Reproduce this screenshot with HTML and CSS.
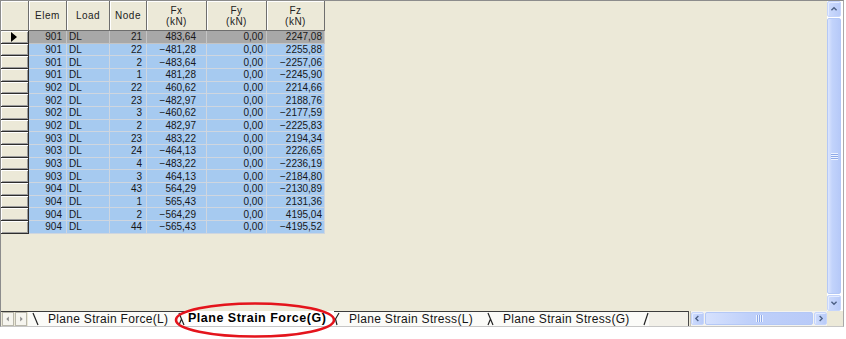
FILE: index.html
```html
<!DOCTYPE html>
<html lang="en">
<head>
    <meta charset="UTF-8">
    <title>Plane Strain Force(G)</title>
    <link rel="stylesheet" href="styles.css">
</head>
<body>
    <div class="screen">
        <div class="window">
            <div class="main">
                <div class="sheet">
                    <table class="grid">
                        <thead>
                            <tr>
                                <th class="c-head"></th>
                                <th class="c-elem">Elem</th>
                                <th class="c-load">Load</th>
                                <th class="c-node">Node</th>
                                <th class="c-fx">Fx<br>(kN)</th>
                                <th class="c-fy">Fy<br>(kN)</th>
                                <th class="c-fz">Fz<br>(kN)</th>
                            </tr>
                        </thead>
                        <tbody>
                            <tr class="current"><td class="rowhead"><span class="pointer"></span></td><td>901</td><td class="txt">DL</td><td>21</td><td>483,64</td><td>0,00</td><td>2247,08</td></tr>
                            <tr><td class="rowhead"></td><td>901</td><td class="txt">DL</td><td>22</td><td>−481,28</td><td>0,00</td><td>2255,88</td></tr>
                            <tr><td class="rowhead"></td><td>901</td><td class="txt">DL</td><td>2</td><td>−483,64</td><td>0,00</td><td>−2257,06</td></tr>
                            <tr><td class="rowhead"></td><td>901</td><td class="txt">DL</td><td>1</td><td>481,28</td><td>0,00</td><td>−2245,90</td></tr>
                            <tr><td class="rowhead"></td><td>902</td><td class="txt">DL</td><td>22</td><td>460,62</td><td>0,00</td><td>2214,66</td></tr>
                            <tr><td class="rowhead"></td><td>902</td><td class="txt">DL</td><td>23</td><td>−482,97</td><td>0,00</td><td>2188,76</td></tr>
                            <tr><td class="rowhead"></td><td>902</td><td class="txt">DL</td><td>3</td><td>−460,62</td><td>0,00</td><td>−2177,59</td></tr>
                            <tr><td class="rowhead"></td><td>902</td><td class="txt">DL</td><td>2</td><td>482,97</td><td>0,00</td><td>−2225,83</td></tr>
                            <tr><td class="rowhead"></td><td>903</td><td class="txt">DL</td><td>23</td><td>483,22</td><td>0,00</td><td>2194,34</td></tr>
                            <tr><td class="rowhead"></td><td>903</td><td class="txt">DL</td><td>24</td><td>−464,13</td><td>0,00</td><td>2226,65</td></tr>
                            <tr><td class="rowhead"></td><td>903</td><td class="txt">DL</td><td>4</td><td>−483,22</td><td>0,00</td><td>−2236,19</td></tr>
                            <tr><td class="rowhead"></td><td>903</td><td class="txt">DL</td><td>3</td><td>464,13</td><td>0,00</td><td>−2184,80</td></tr>
                            <tr><td class="rowhead"></td><td>904</td><td class="txt">DL</td><td>43</td><td>564,29</td><td>0,00</td><td>−2130,89</td></tr>
                            <tr><td class="rowhead"></td><td>904</td><td class="txt">DL</td><td>1</td><td>565,43</td><td>0,00</td><td>2131,36</td></tr>
                            <tr><td class="rowhead"></td><td>904</td><td class="txt">DL</td><td>2</td><td>−564,29</td><td>0,00</td><td>4195,04</td></tr>
                            <tr><td class="rowhead"></td><td>904</td><td class="txt">DL</td><td>44</td><td>−565,43</td><td>0,00</td><td>−4195,52</td></tr>
                        </tbody>
                    </table>
                </div>

                <!-- vertical scrollbar -->
                <div class="vscroll">
                    <div class="sb-btn v-btn">
                        <svg width="14" height="16" viewBox="0 0 14 16"><path d="M4 9.5 L7 6.5 L10 9.5" fill="none" stroke="#4d6185" stroke-width="1.6"/></svg>
                    </div>
                    <div class="sb-thumb v-thumb"><span class="grip v-grip"></span></div>
                    <div class="sb-btn v-btn">
                        <svg width="14" height="16" viewBox="0 0 14 16"><path d="M4 6.5 L7 9.5 L10 6.5" fill="none" stroke="#4d6185" stroke-width="1.6"/></svg>
                    </div>
                </div>
            </div>

            <div class="bottombar">
                <div class="tabs">
                    <div class="tab-nav">
                        <span class="nav-btn"><svg width="12" height="12" viewBox="0 0 12 12"><path d="M7 3 L4 6 L7 9 Z" fill="#8c8c8c"/></svg></span>
                        <span class="nav-btn"><svg width="12" height="12" viewBox="0 0 12 12"><path d="M5 3 L8 6 L5 9 Z" fill="#8c8c8c"/></svg></span>
                    </div>
                    <svg class="sep s1" width="12" height="14" viewBox="0 0 12 14"><path d="M5 1 L10 13" stroke="#222" stroke-width="1.2" fill="none"/></svg>
                    <div class="tab tab-1">Plane Strain Force(L)</div>
                    <svg class="sep s2" width="10" height="14" viewBox="0 0 10 14"><path d="M3 1 L8 13 M5.5 7 L3 13" stroke="#222" stroke-width="1.2" fill="none"/></svg>
                    <div class="tab tab-2 active">Plane Strain Force(G)</div>
                    <svg class="sep s3" width="6" height="14" viewBox="0 0 6 14"><path d="M5 1 L1.5 7 L3 13" stroke="#222" stroke-width="1.2" fill="none"/></svg>
                    <div class="tab tab-3">Plane Strain Stress(L)</div>
                    <svg class="sep s4" width="8" height="14" viewBox="0 0 8 14"><path d="M2 1 L7 13 M4.5 7 L2 13" stroke="#222" stroke-width="1.2" fill="none"/></svg>
                    <div class="tab tab-4">Plane Strain Stress(G)</div>
                    <svg class="sep s5" width="8" height="14" viewBox="0 0 8 14"><path d="M7 1 L3 13" stroke="#222" stroke-width="1.2" fill="none"/></svg>
                    <div class="tab-fill"></div>
                </div>
                <div class="divider"></div>

                <!-- horizontal scrollbar -->
                <div class="hscroll">
                    <div class="sb-btn h-btn">
                        <svg width="13" height="13" viewBox="0 0 13 13"><path d="M7.5 3.5 L4.5 6.5 L7.5 9.5" fill="none" stroke="#4d6185" stroke-width="1.6"/></svg>
                    </div>
                    <div class="sb-thumb h-thumb"><span class="grip h-grip"></span></div>
                    <div class="sb-btn h-btn">
                        <svg width="13" height="13" viewBox="0 0 13 13"><path d="M5.5 3.5 L8.5 6.5 L5.5 9.5" fill="none" stroke="#4d6185" stroke-width="1.6"/></svg>
                    </div>
                </div>
                <div class="sb-corner"></div>
            </div>
        </div>

        <!-- red mark around the active tab -->
        <svg class="mark" width="846" height="339" viewBox="0 0 846 339">
            <ellipse cx="255" cy="320" rx="79" ry="16.5" fill="none" stroke="#e4141c" stroke-width="2.6"/>
        </svg>
    </div>
</body>
</html>
```

FILE: styles.css
```css
* {
    margin: 0;
    padding: 0;
    box-sizing: border-box;
}

body {
    background: #fff;
    font-family: 'Liberation Sans', Arial, sans-serif;
    color: #1c1c1c;
}

.screen {
    position: relative;
    width: 846px;
    height: 339px;
}

/* Window frame */
.window {
    width: 844px;
    height: 327px;
    border: 1px solid #8c8c8c;
    border-right-color: #a8a8a8;
    border-bottom-color: #c6c6c6;
    background: #ece9d8;
    display: flex;
    flex-direction: column;
}

.main {
    height: 310px;
    display: flex;
}

.sheet {
    flex: 1;
    background: #ece9d8;
}

/* Grid */
.grid {
    border-collapse: separate;
    border-spacing: 0;
    table-layout: fixed;
    width: 324px;
    font-size: 10px;
    line-height: 11px;
}

.grid th {
    height: 30px;
    font-weight: normal;
    color: #222;
    letter-spacing: 0.5px;
    text-align: center;
    background: #ece9d8;
    border-right: 1px solid #6e6e6e;
    border-bottom: 1px solid #6e6e6e;
    box-shadow: inset 1px 1px #fff;
}

.c-head { width: 28px; }
.c-elem { width: 38px; }
.c-load { width: 43px; }
.c-node { width: 37px; }
.c-fx { width: 60px; }
.c-fy { width: 60px; }
.c-fz { width: 58px; }

.grid td {
    height: 12.67px;
    padding: 0 3px 0 0;
    text-align: right;
    white-space: nowrap;
    color: #181818;
    background: #a6caf0;
    border-right: 1px solid #cfd6df;
    border-bottom: 1px solid #cfd6df;
}

/* per-column right padding, as in the source grid */
.grid td:nth-child(2),
.grid td:nth-child(4) {
    padding-right: 4px;
}

.grid td:nth-child(5) {
    padding-right: 10px;
}

.grid td:nth-child(7) {
    padding-right: 2px;
}

.grid td.txt {
    text-align: left;
    padding: 0 0 0 2px;
}

.grid tr.current td {
    background: #a8a8a8;
    border-right-color: #c4c4c4;
    border-bottom-color: #c4c4c4;
}

.grid td.rowhead,
.grid tr.current td.rowhead {
    background: #ece9d8;
    border-right: 1px solid #2e2e2e;
    border-bottom: 1px solid #2e2e2e;
    box-shadow: inset 1px 1px #fff, inset -1px -1px #9c9c9c;
    padding: 0;
}

.pointer {
    display: block;
    width: 0;
    height: 0;
    margin-left: 10px;
    border-left: 6px solid #000;
    border-top: 5px solid transparent;
    border-bottom: 5px solid transparent;
}

/* Scrollbars (XP blue) */
.vscroll {
    width: 16px;
    padding-right: 2px;
    background: #fff;
    display: flex;
    flex-direction: column;
    gap: 1px;
}

.sb-btn {
    display: flex;
    align-items: center;
    justify-content: center;
    background: linear-gradient(to right, #cddbfd, #b9cbf8);
    border: 1px solid #c6d5fb;
    border-radius: 2px;
    box-shadow: inset 1px 1px #e4ecff;
}

.v-btn {
    height: 16px;
}

.sb-thumb {
    flex: 1;
    display: flex;
    align-items: center;
    justify-content: center;
    border: 1px solid #b4c8f6;
    border-radius: 2px;
    background: linear-gradient(to right, #d6e1fd, #bfd0fa 40%, #b8caf8);
}

.v-thumb {
    background: linear-gradient(to right, #dbe5fe, #c2d3fb 35%, #b6c9f8);
}

.grip {
    display: block;
}

.v-grip {
    width: 7px;
    height: 7px;
    background: repeating-linear-gradient(to bottom, #eef3ff 0 1px, #8ea9e8 1px 2px);
}

.h-grip {
    width: 7px;
    height: 7px;
    background: repeating-linear-gradient(to right, #eef3ff 0 1px, #8ea9e8 1px 2px);
}

/* Bottom bar: sheet tabs + horizontal scroll */
.bottombar {
    height: 15px;
    display: flex;
}

.tabs {
    width: 687px;
    display: flex;
    align-items: stretch;
    background: #fbfbf8;
    border-top: 1px solid #3c3c3c;
}

.tab-nav {
    display: flex;
    gap: 1px;
    padding: 0 0 0 1px;
    width: 27px;
    background: #ece9d8;
}

.nav-btn {
    width: 12px;
    display: flex;
    align-items: center;
    justify-content: center;
    background: #f6f5ef;
    border: 1px solid #b9b7ab;
}

.sep {
    flex: none;
    display: block;
}

.tab {
    flex: none;
    font-size: 12px;
    line-height: 14px;
    letter-spacing: 0.3px;
    color: #151515;
    white-space: nowrap;
    overflow: hidden;
}

.tab-1 { width: 136px; padding-left: 8px; }
.tab-2 { width: 148px; padding-left: 2px; }
.tab-3 { width: 146px; padding-left: 9px; }
.tab-4 { width: 147px; padding-left: 9px; }

.tab.active {
    background: #fff;
    font-weight: bold;
    font-size: 12.5px;
    letter-spacing: 0.5px;
    color: #000;
    margin-top: -1px;
    line-height: 15px;
}

.tab-fill {
    flex: 1;
    background: #f2f0e8;
}

.divider {
    width: 3px;
    border-left: 1px solid #4a4a4a;
    border-right: 1px solid #c9c7bc;
    background: #ece9d8;
}

.hscroll {
    width: 136px;
    display: flex;
    gap: 1px;
    padding: 1px 0;
    background: #f4f3ee;
}

.h-btn {
    width: 13px;
}

.sb-corner {
    flex: 1;
    background: #ece9d8;
}

/* Annotation */
.mark {
    position: absolute;
    left: 0;
    top: 0;
    pointer-events: none;
}
```
